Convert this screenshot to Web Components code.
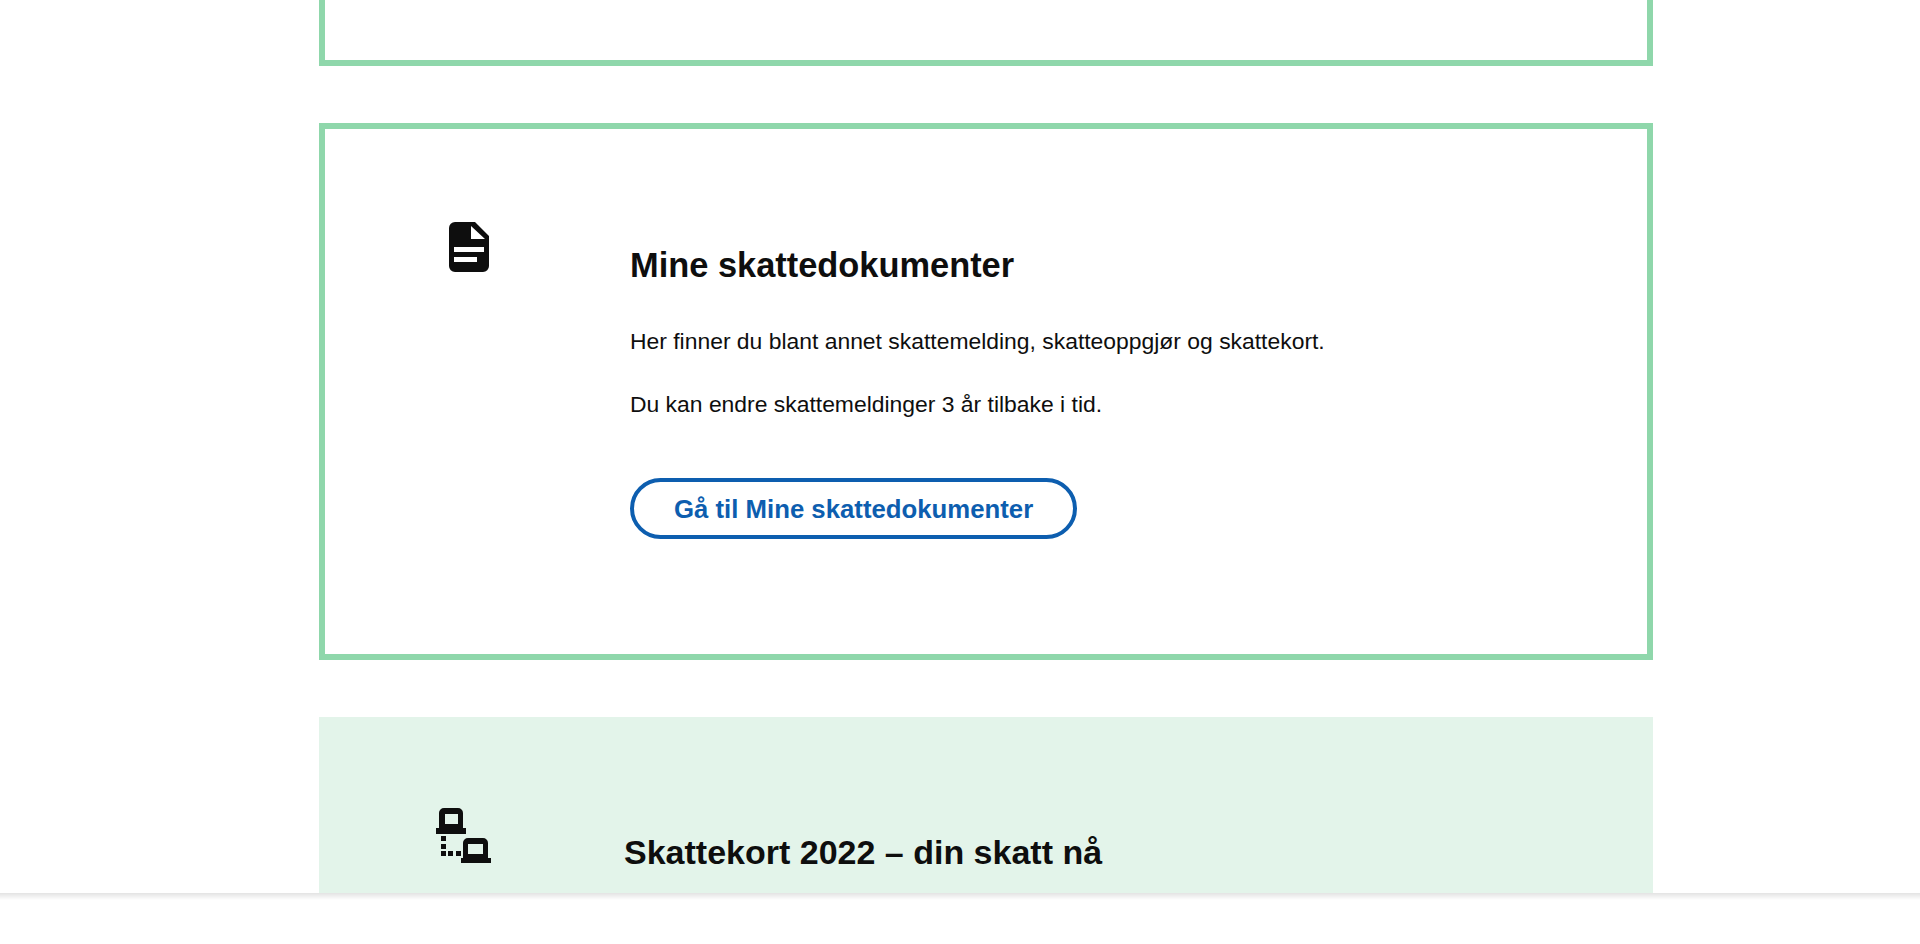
<!DOCTYPE html>
<html lang="no">
<head>
<meta charset="utf-8">
<title>Skatteetaten</title>
<style>
  html, body { margin: 0; height: 100%; background: #fff; overflow: hidden; }
  body { font-family: "Liberation Sans", Arial, sans-serif; color: #0e0e0e; }
</style>
</head>
<body>
<tax-page>
  <tax-card kind="stub"></tax-card>
  <tax-card kind="outline" heading="Mine skattedokumenter">
    <svg slot="icon" width="40" height="50" viewBox="0 0 40 50">
      <path fill="#0e0e0e" fill-rule="evenodd" d="M6 0H26L40 14V44a6 6 0 0 1-6 6H6a6 6 0 0 1-6-6V6a6 6 0 0 1 6-6ZM22 4V17H36ZM5 25V30H35V25ZM5 35V40H28V35Z"/>
    </svg>
    <p>Her finner du blant annet skattemelding, skatteoppgjør og skattekort.</p>
    <p>Du kan endre skattemeldinger 3 år tilbake i tid.</p>
    <tax-button>Gå til Mine skattedokumenter</tax-button>
  </tax-card>
  <tax-card kind="filled" heading="Skattekort 2022 – din skatt nå">
    <svg slot="icon" width="55" height="55" viewBox="0 0 55 55">
      <g fill="#0e0e0e">
        <path fill-rule="evenodd" d="M8 0H22a5 5 0 0 1 5 5V20H30V26H0V20H3V5A5 5 0 0 1 8 0ZM9 6V16H22V6Z"/>
        <path fill-rule="evenodd" d="M32 30H47a5 5 0 0 1 5 5V50H55V55H25V50H27V35A5 5 0 0 1 32 30ZM32 36V46H47V36Z"/>
        <rect x="5" y="28" width="5" height="5"/>
        <rect x="5" y="36" width="5" height="5"/>
        <rect x="5" y="43" width="5" height="5"/>
        <rect x="12" y="43" width="5" height="5"/>
        <rect x="20" y="43" width="5" height="5"/>
      </g>
    </svg>
  </tax-card>
</tax-page>

<script>
class TaxPage extends HTMLElement {
  constructor() {
    super();
    this.attachShadow({ mode: 'open' });
    this.shadowRoot.innerHTML = `
    <style>
      :host { display: flex; flex-direction: column; height: 944px; }
      main {
        height: 893px;
        overflow: hidden;
        display: flex;
        flex-direction: column;
        gap: 57px;
        padding: 0 267px 0 319px;
        box-sizing: border-box;
      }
      footer {
        height: 51px;
        background: linear-gradient(rgba(0,0,0,0.11), rgba(0,0,0,0) 7px), #fff;
      }
    </style>
    <main><slot></slot></main>
    <footer></footer>
    `;
  }
}

class TaxCard extends HTMLElement {
  constructor() {
    super();
    this.attachShadow({ mode: 'open' });
    this.shadowRoot.innerHTML = `
    <style>
      :host { display: block; flex: none; box-sizing: border-box; }
      :host([kind="stub"]) { height: 66px; border: 6px solid #8fd7ab; border-top: 0; }
      :host([kind="outline"]) { height: 537px; border: 6px solid #8fd7ab; }
      :host([kind="filled"]) { height: 240px; background: #e3f4ea; }
      .wrap { display: grid; }
      :host([kind="outline"]) .wrap { padding: 93px 0 0 124px; grid-template-columns: 181px 1fr; }
      :host([kind="filled"]) .wrap { padding: 91px 0 0 117px; grid-template-columns: 188px 1fr; }
      :host([kind="stub"]) .wrap { display: none; }
      h2 { margin: 0; line-height: 40px; font-weight: 700; }
      :host([kind="outline"]) h2 { margin-top: 23px; font-size: 34.4px; }
      :host([kind="filled"]) h2 { margin-top: 24px; font-size: 34px; }
      ::slotted(p) { margin: 0 0 37px; font-size: 22.9px; line-height: 26px; color: #0e0e0e; }
      .body { display: block; margin-top: 43px; }
    </style>
    <div class="wrap">
      <div class="icon"><slot name="icon"></slot></div>
      <div>
        <h2></h2>
        <div class="body"><slot></slot></div>
      </div>
    </div>
    `;
  }

  connectedCallback() {
    this.shadowRoot.querySelector('h2').textContent = this.getAttribute('heading') || '';
  }
}

class TaxButton extends HTMLElement {
  constructor() {
    super();
    this.attachShadow({ mode: 'open' });
    this.shadowRoot.innerHTML = `
    <style>
      :host { display: block; margin-top: 61px; }
      a {
        display: inline-flex;
        align-items: center;
        box-sizing: border-box;
        height: 61px;
        padding: 2px 40px 0;
        border: 4px solid #0d5eaf;
        border-radius: 31px;
        color: #0d5eaf;
        font-size: 25.75px;
        font-weight: 700;
        text-decoration: none;
      }
    </style>
    <a href="#"><slot></slot></a>
    `;
  }
}

customElements.define('tax-page', TaxPage);
customElements.define('tax-card', TaxCard);
customElements.define('tax-button', TaxButton);
</script>
</body>
</html>
